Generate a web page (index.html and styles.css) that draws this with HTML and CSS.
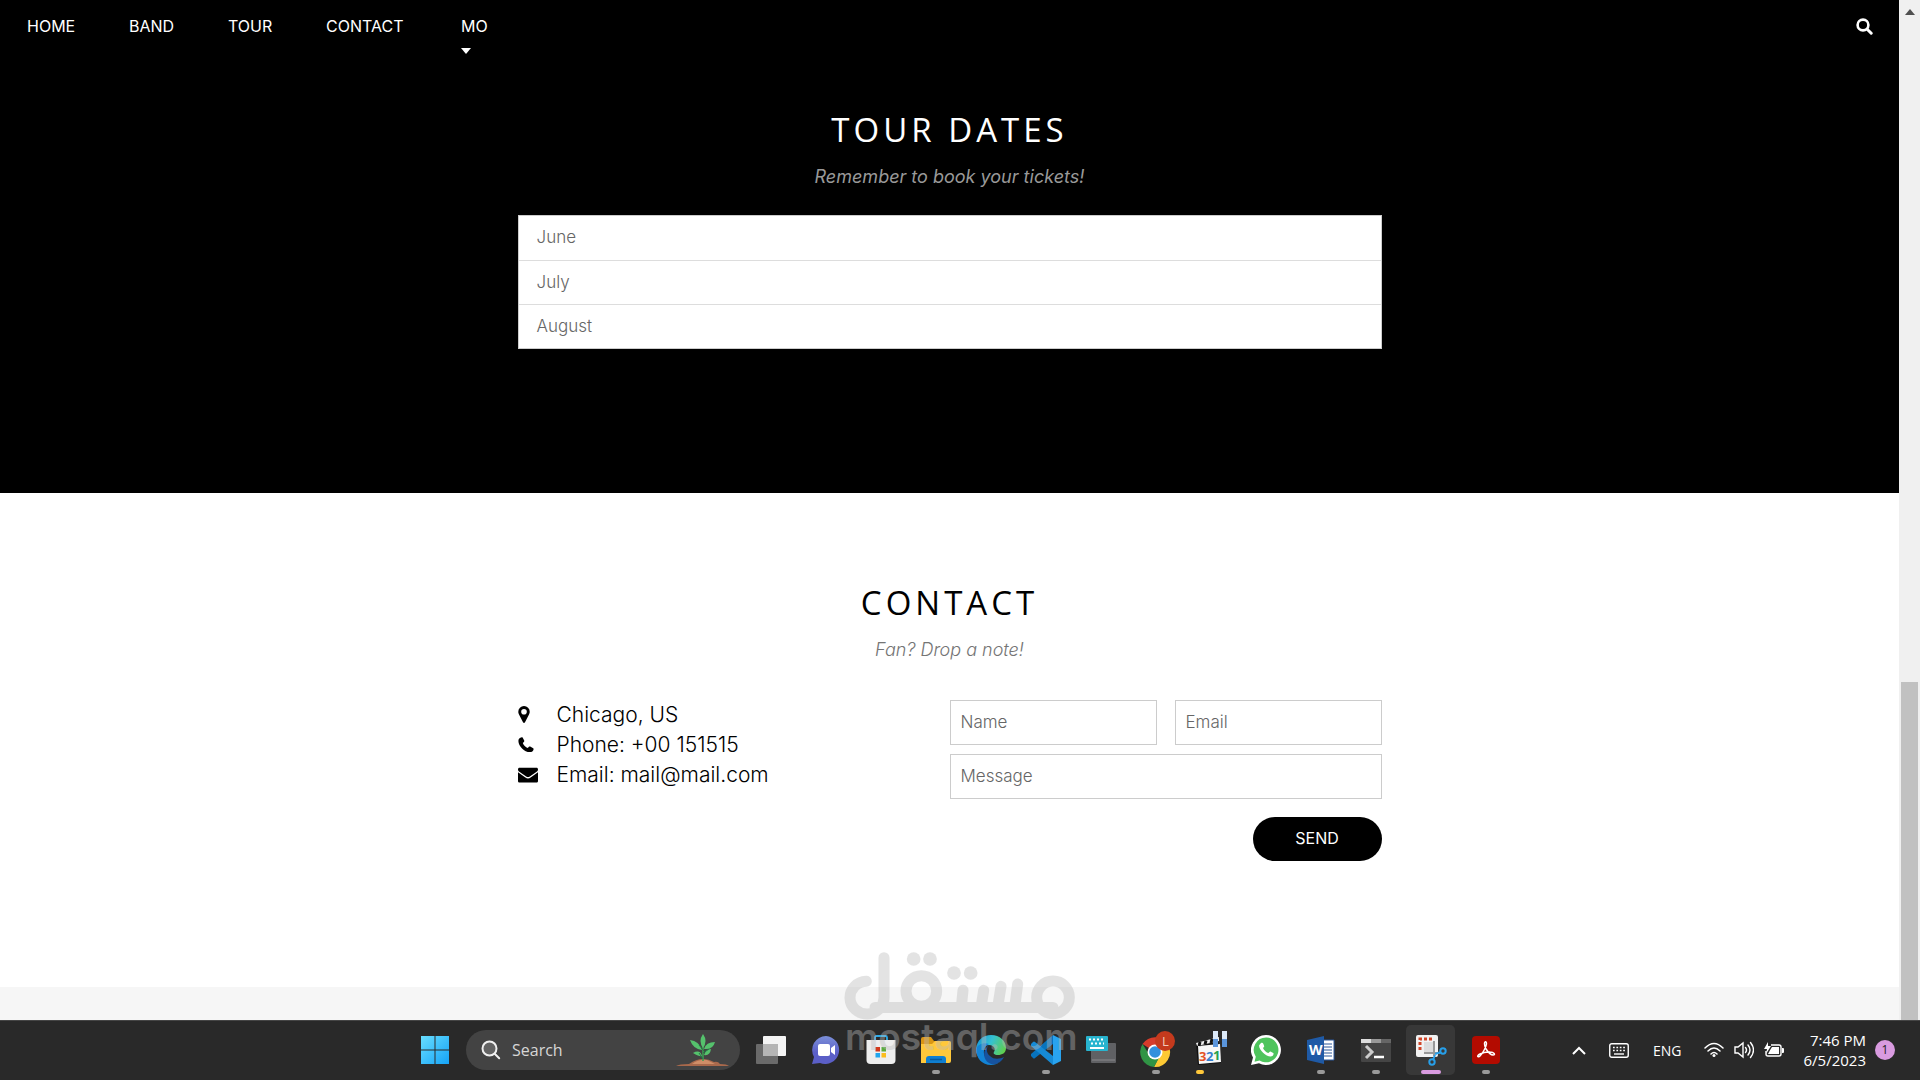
FILE: index.html
```
<!DOCTYPE html>
<html lang="en">
<head>
    <meta charset="UTF-8">
    <meta name="viewport" content="width=device-width, initial-scale=1.0">
    <title>Band - Tour and Contact</title>
    <link rel="stylesheet" href="styles.css">
</head>
<body>

<div class="window">
    <div class="page">

        <!-- Navbar -->
        <nav class="navbar">
            <a href="#home">HOME</a>
            <a href="#band">BAND</a>
            <a href="#tour">TOUR</a>
            <a href="#contact">CONTACT</a>
            <button class="more" type="button">MO
                <svg width="10" height="6" viewBox="0 0 10 6"><path d="M0 0h10L5 6z" fill="#fff"/></svg>
            </button>
            <a class="search-link" href="#search" aria-label="Search">
                <svg width="17" height="17" viewBox="0 0 17 17" fill="none" stroke="#fff" stroke-linecap="round"><circle cx="7" cy="7" r="5.4" stroke-width="2.6"/><path d="M11.2 11.2l4 4" stroke-width="3"/></svg>
            </a>
        </nav>

        <!-- Tour -->
        <section class="tour" id="tour">
            <div class="content">
                <h2>TOUR DATES</h2>
                <p class="subtitle tour-note">Remember to book your tickets!</p>
                <ul class="months">
                    <li>June</li>
                    <li>July</li>
                    <li>August</li>
                </ul>
            </div>
        </section>

        <!-- Contact -->
        <section class="contact" id="contact">
            <div class="content">
                <h2>CONTACT</h2>
                <p class="subtitle">Fan? Drop a note!</p>
                <div class="contact-row">
                    <ul class="details">
                        <li>
                            <svg width="20" height="20" viewBox="0 0 20 20"><path fill-rule="evenodd" d="M6 1a5.600 5.600 0 0 1 5.700 5.700c0 1.200-.3 1.900-.7 2.700L7 17.200q-1 1.400-2 0L1 9.400C.6 8.600.3 7.900.3 6.700A5.600 5.600 0 0 1 6 1zm0 2.900a2.800 2.800 0 1 0 0 5.600 2.800 2.800 0 0 0 0-5.600z"/></svg>
                            <span>Chicago, US</span>
                        </li>
                        <li>
                            <svg width="20" height="20" viewBox="0 0 20 20"><path d="M3.700 2.200c.5-.1.700 0 .9.400l1.600 3c.2.500.1.900-.3 1.300l-1.100 1c.9 2.300 2.700 4.100 5 5.100l1.100-1.200c.4-.4.800-.5 1.300-.2l3 1.700c.4.200.5.500.4.900-.3 1.900-1.800 2.900-3.700 2.900C6.300 17.100.5 11.200.4 5.900.4 4 1.700 2.500 3.700 2.200z"/></svg>
                            <span>Phone: +00 151515</span>
                        </li>
                        <li>
                            <svg width="20" height="20" viewBox="0 0 20 20"><path d="M1.600 2.800h16.800c1 0 1.600.6 1.600 1.600 0 1.200-.8 2-1.700 2.600l-6.500 4.500c-1.200.8-2.400.8-3.600 0L1.700 7C.7 6.300 0 5.600 0 4.400c0-1 .6-1.600 1.600-1.600zM0 7.300l7.400 5.300c1.700 1.200 3.500 1.200 5.200 0L20 7.300v8.600c0 1-.7 1.700-1.700 1.700H1.700c-1 0-1.700-.7-1.700-1.700z"/></svg>
                            <span>Email: mail@mail.com</span>
                        </li>
                    </ul>
                    <form class="note-form">
                        <input type="text" placeholder="Name" aria-label="Name">
                        <input type="email" placeholder="Email" aria-label="Email">
                        <input class="message" type="text" placeholder="Message" aria-label="Message">
                        <button type="button">SEND</button>
                    </form>
                </div>
            </div>
        </section>

        <footer class="footer"></footer>
    </div>

    <div class="scrollbar">
        <svg width="10" height="6" viewBox="0 0 10 6"><path d="M0 6h10L5 0z" fill="#505050"/></svg>
        <div class="thumb"></div>
    </div>
</div>

<!-- Taskbar -->
<div class="taskbar">
    <div class="apps">
        <button class="app" type="button" aria-label="Start">
            <svg width="30" height="30" viewBox="0 0 30 30"><defs><linearGradient id="win" x1="0" y1="0" x2="30" y2="30" gradientUnits="userSpaceOnUse"><stop stop-color="#6be0ff"/><stop offset="1" stop-color="#12a0f5"/></linearGradient></defs><path fill="url(#win)" d="M1 1h13.500v13.500H1zM15.500 1H29v13.500H15.500zM1 15.500h13.500V29H1zM15.500 15.500H29V29H15.500z"/></svg>
        </button>
        <label class="search">
            <svg width="20" height="20" viewBox="0 0 20 20" fill="#636363" stroke="#f0f0f0" stroke-width="2" stroke-linecap="round"><circle cx="8.500" cy="8.500" r="7"/><path d="M13.700 13.700l4.500 4.500"/></svg>
            <input type="text" placeholder="Search" aria-label="Search">
            <svg width="54" height="34" viewBox="0 0 54 34"><path d="M0 33q3-2 13-2 7-5 14-5 6 0 11 3 4-1 6 2 7 0 9 2z" fill="#a9694c"/><path d="M16 31q7-5 15-4l8 4z" fill="#cf8e68"/><path d="M27 28V12" stroke="#3f9d53" stroke-width="1.600"/><g fill="#55c16c"><path d="M27 15q-5-7 0-14 5 7 0 14z"/><path d="M26 17q-9-1-12-10 9 1 12 10zM28 16q2-7 11-7-2 8-11 7zM26 23q-2 1-9-3 7-4 9 3zM28 22q2-6 7-6-1 7-7 6z"/></g><path d="M27 26l-4-6M28 18l-5-6M27 20l6-4" stroke="#237b46"/></svg>
        </label>
        <button class="app" type="button" aria-label="Task view">
            <svg width="32" height="30" viewBox="0 0 32 30"><rect x="8" y="1" width="23" height="20" rx="1" fill="#f4f4f4"/><rect x="1" y="9" width="22" height="20" rx="1" fill="#7b7b7b" opacity=".8"/><path d="M8 9h15v12H8z" fill="#b5b5b5"/></svg>
        </button>
        <button class="app" type="button" aria-label="Chat">
            <svg width="30" height="30" viewBox="0 0 30 30"><defs><linearGradient id="chat" x1="0" y1="0" x2="0" y2="1"><stop stop-color="#7b8fd8"/><stop offset=".6" stop-color="#5b5fc7"/></linearGradient></defs><path d="M15 1a14 14 0 1 1-6 27l-8 1 2-7A14 14 0 0 1 15 1z" fill="url(#chat)"/><rect x="7" y="9" width="12" height="12" rx="2" fill="#fff"/><path d="M20 13l4-3v10l-4-3z" fill="#fff"/></svg>
        </button>
        <button class="app" type="button" aria-label="Microsoft Store">
            <svg width="30" height="30" viewBox="0 0 30 30"><path d="M9 6V2.500Q9 1 10.500 1h9Q21 1 21 2.500V6" fill="none" stroke="#2cabe8" stroke-width="1.800"/><path d="M.5 5h29v20q0 4-4 4h-21q-4 0-4-4z" fill="#eee"/><path d="M9.500 12H14v4.500H9.500z" fill="#d3381c"/><path d="M15.500 12H20v4.500h-4.500z" fill="#5cab3a"/><path d="M9.500 18H14v4.500H9.500z" fill="#22a6ee"/><path d="M15.500 18H20v4.500h-4.500z" fill="#fbbd1d"/></svg>
        </button>
        <button class="app running" type="button" aria-label="File Explorer">
            <svg width="30" height="30" viewBox="0 0 30 30"><path d="M0 4q0-2 2-2h8l3 4h15q2 0 2 2v6H0z" fill="#d99615"/><path d="M0 9h11l3-3h14q2 0 2 2v18q0 2-2 2H0z" fill="#ffc83a"/><path d="M5 28v-4q0-3 3-3h14q3 0 3 3v4z" fill="#0f7fd1"/><path d="M9 24.500h12" stroke="#075a9e" stroke-width="1.500"/></svg>
        </button>
        <button class="app" type="button" aria-label="Edge">
            <svg width="30" height="30" viewBox="0 0 30 30"><defs><linearGradient id="edge" x1="0" y1="0" x2="30" y2="14" gradientUnits="userSpaceOnUse"><stop stop-color="#1590d8"/><stop offset=".5" stop-color="#35c1d1"/><stop offset="1" stop-color="#62d048"/></linearGradient></defs><path d="M0 14C1 5 7 0 15 0c9 0 15 6 15 13 0 5-4 7-8 7-4 0-5-2-4-3 2-3 0-7-5-7C8 10 3 13 2 21Q0 18 0 14z" fill="url(#edge)"/><path d="M0 14c2-5 8-7 13-5-5 2-7 9-3 14s10 7 14 4c-3 2-6 3-9 3C6 30 0 23 0 14z" fill="#1384d6"/><path d="M13 10c-3 3-3 8 1 11 4 4 10 3 14 1-3 6-10 9-15 6C7 25 6 15 13 10z" fill="#1653a0"/></svg>
        </button>
        <button class="app running" type="button" aria-label="Visual Studio Code">
            <svg width="30" height="30" viewBox="0 0 30 30"><path d="M22 0l8 4v22l-8 4z" fill="#29a3ef"/><path d="M22 0v9L4 23q-1 1-2 0l-2-2q-1-1 0-2z" fill="#0873bd"/><path d="M22 30v-9L4 7Q3 6 2 7L0 9q-1 1 0 2z" fill="#168ad5"/></svg>
        </button>
        <button class="app" type="button" aria-label="On-screen keyboard">
            <svg width="32" height="30" viewBox="0 0 32 30"><rect x="6" y="8" width="25" height="20" rx="1" fill="#606164"/><path d="M7 25h23" stroke="#8a8a8c"/><rect x="1" y="1" width="22" height="15" rx="1" fill="#28b4cf"/><path d="M4 4.500h16M6 8.500h13" stroke="#fff" stroke-width="2" stroke-dasharray="2 2"/><path d="M5 13h14" stroke="#fff" stroke-width="2"/></svg>
        </button>
        <button class="app running" type="button" aria-label="Chrome">
            <svg width="38" height="42" viewBox="-1 0 38 42"><path d="M17 23L4.500 15A15 15 0 0 1 30 15.500L17 16z" fill="#d63c2b"/><path d="M17 23l13-7.500A15 15 0 0 1 16 38l6-12z" fill="#fdc934"/><path d="M17 23l5 4-6 11A15 15 0 0 1 4.500 15l7 11z" fill="#309445"/><circle cx="17" cy="23" r="7.500" fill="#fff"/><circle cx="17" cy="23" r="5.800" fill="#3390dd"/><circle cx="27" cy="12" r="10" fill="#c43a1d"/><text x="24" y="17" font-size="13" fill="#f1c9b9">L</text></svg>
        </button>
        <button class="app loading" type="button" aria-label="Media Player Classic">
            <svg width="34" height="38" viewBox="-1 0 34 38"><path d="M1 12l22-5 3 25-23 2z" fill="#111"/><path d="M3 15l22-2 1 18-22 2z" fill="#f7f7f7"/><path d="M1 12l23-6v4L2 15z" fill="#eee"/><path d="M5 11l-1 4M11 9.500l-1 4M17 8l-1 4" stroke="#111" stroke-width="3"/><g font-size="13" font-weight="700"><text x="4" y="30" fill="#e35227">3</text><text x="11" y="30" fill="#3580cc">2</text><text x="18" y="29" fill="#26a150">1</text></g><path d="M18 0h5v16h-5zM27 0h5v16h-5z" fill="#dce9f9"/><path d="M18 8h5v8h-5zM27 8h5v8h-5z" fill="#5a95dc"/></svg>
        </button>
        <button class="app" type="button" aria-label="WhatsApp">
            <svg width="30" height="30" viewBox="0 0 30 30"><path d="M15 0a15 15 0 1 1-7 28.300L0 30l2-7.500A15 15 0 0 1 15 0z" fill="#fff"/><path d="M15.200 2.500a12.400 12.400 0 1 1-6.600 23L3.500 26.700l1.300-5A12.400 12.400 0 0 1 15.200 2.500z" fill="#4ec45c"/><path d="M10 8c1-.6 1.800-.5 2.300.8l.9 2.200c.2.700-1.200 1.700-1.100 2.200 1 2.200 2.700 3.800 5 4.800.7.200 1.700-1.700 2.400-1.400l2.700 1.300c.7.400.4 2-.5 2.900C17.500 24.500 6.500 14 8.300 10z" fill="#fff"/></svg>
        </button>
        <button class="app running" type="button" aria-label="Word">
            <svg width="28" height="28" viewBox="0 0 28 28"><path d="M14 4h13v20H14z" fill="#fff" stroke="#2b579a"/><path d="M17 8h8M17 11h8M17 14h8M17 17h8M17 20h8" stroke="#2b579a"/><path d="M0 4l17-4v28L0 24z" fill="#1f5aa6"/><text x="2" y="19" font-size="14" font-weight="700" fill="#fff">W</text></svg>
        </button>
        <button class="app running" type="button" aria-label="Terminal">
            <svg width="30" height="24" viewBox="0 0 30 24"><rect y="1" width="30" height="23" rx="1" fill="#454545"/><path d="M0 1h10v4H0z" fill="#ddd"/><path d="M10 1h10v4H10z" fill="#999"/><path d="M20 1h10v4H20z" fill="#666"/><path d="M5 8l6 6-6 6" fill="none" stroke="#ccc" stroke-width="3"/><path d="M13 19h10" stroke="#fff" stroke-width="2.500"/></svg>
        </button>
        <button class="app running active" type="button" aria-label="Snipping Tool">
            <svg width="32" height="32" viewBox="0 0 32 32"><rect x="1" y="1" width="22" height="22" rx="2" fill="#f2f2f2"/><path d="M5 16V5h12" fill="none" stroke="#d04629" stroke-width="3" stroke-dasharray="3 2"/><path d="M9 20V8h9v12z" fill="#ddd"/><path d="M19 7v15M9 19h16" stroke="#999" stroke-width="2"/><g fill="none" stroke="#279fe9" stroke-width="2"><circle cx="17" cy="28" r="2.700"/><circle cx="28" cy="17" r="2.700"/><path d="M18 26l2-5M26 18l-6 2"/></g></svg>
        </button>
        <button class="app running" type="button" aria-label="Acrobat">
            <svg width="28" height="28" viewBox="0 0 28 28"><rect width="28" height="28" rx="4" fill="#b30b00"/><path d="M14 6c-2-1-2 3 0 7 2 3 5 6 7 6 3 0 1-3-3-3-4-.5-7 .5-10 2-4 2-2 4 0 2 3-3 6-9 6.500-12Q14.500 6.500 14 6z" fill="none" stroke="#fff" stroke-width="1.500"/></svg>
        </button>
    </div>

    <div class="tray">
        <svg width="14" height="9" viewBox="0 0 14 9"><path d="M1 8l6-6 6 6" fill="none" stroke="#fff" stroke-width="2"/></svg>
        <svg class="keyboard" width="20" height="15" viewBox="0 0 20 15" fill="none" stroke="#fff"><rect x=".75" y=".75" width="18.500" height="13.500" rx="2" stroke-width="1.400"/><path d="M4 4.500h13M4 7.500h13" stroke-width="1.700" stroke-dasharray="1.700 1.700"/><path d="M5 11h10" stroke-width="1.400"/></svg>
        <span class="lang">ENG</span>
        <div class="status">
            <svg width="20" height="16" viewBox="0 0 20 16" fill="none" stroke="#fff" stroke-width="1.500" stroke-linecap="round"><path d="M1 6q9-9 18 0M4 9q6-6 12 0M7 12q3-3 6 0"/><circle cx="10" cy="13.500" r="1.500" fill="#fff" stroke="none"/></svg>
            <svg width="20" height="18" viewBox="0 0 20 18" fill="none" stroke="#fff" stroke-width="1.400" stroke-linecap="round"><path d="M1 6h3l5-4v14l-5-4H1zM11.500 6.500q2 2.500 0 5M14 4q4 5 0 10M16.500 1.500q6 7.500 0 15"/></svg>
            <svg width="20" height="16" viewBox="0 0 20 16"><path d="M7 3h8q2 0 2 2v7q0 2-2 2H4q-2 0-2-2V9" fill="none" stroke="#fff" stroke-width="1.400"/><path d="M18 6h1q1 0 1 1v3q0 1-1 1h-1zM8 5h7v7H4q2-4 4-7z" fill="#fff"/><path d="M4 0L0 7h3l-1 5 5-8H4z" fill="#fff"/></svg>
        </div>
        <div class="clock">
            <div>7:46 PM</div>
            <div>6/5/2023</div>
        </div>
        <span class="badge">1</span>
    </div>
</div>

<!-- Watermark over the page and the taskbar -->
<div class="watermark">
    <svg width="230" height="67" viewBox="75 66 690 201" fill="none" stroke="#bababa" stroke-width="33" stroke-linecap="round">
        <path d="M192 83V202A51 49 0 1 1 139 154M165 232.500H699"/>
        <circle cx="699" cy="202" r="49"/>
        <circle cx="304" cy="183" r="46"/>
        <path d="M424 232L429 181M483 232L491 181M533 232L543 169M584 232L593 162"/>
        <g fill="#bababa" stroke="none"><circle cx="281" cy="87" r="20.500"/><circle cx="330" cy="87" r="20.500"/><circle cx="402" cy="129" r="20.500"/><circle cx="452" cy="129" r="20.500"/></g>
    </svg>
    <div class="watermark-text">mostaql.com</div>
</div>

</body>
</html>
```
FILE: styles.css
```
* {
    box-sizing: border-box;
}

body {
    margin: 0;
    height: 100vh;
    display: flex;
    flex-direction: column;
    overflow: hidden;
    font-family: Inter, sans-serif;
    font-size: 16px;
    color: #000;
}

h2, p, ul {
    margin: 0;
    padding: 0;
}

ul {
    list-style: none;
}

button, input {
    font-family: inherit;
    font-size: inherit;
    border: none;
}

.window {
    flex: 1;
    min-height: 0;
    display: flex;
}

.page {
    flex: 1;
    display: flex;
    flex-direction: column;
    overflow: hidden;
    background-color: #fff;
}

/* Navbar */
.navbar {
    display: grid;
    grid-template-columns: 102px 99px 98px 135px 60px 1fr;
    align-items: start;
    padding: 13px 26px 0 27px;
    height: 62px;
    flex-shrink: 0;
    line-height: 26px;
    background-color: #000;
}

.navbar a, .more {
    color: #fff;
    text-decoration: none;
}

.more {
    padding: 0;
    background: none;
    text-align: left;
    line-height: 26px;
    width: 28px;
}

.more svg {
    display: block;
    margin-top: 9px;
}

.search-link {
    justify-self: end;
    padding-top: 5px;
    line-height: 0;
}

/* Sections */
.content {
    max-width: 864px;
    margin: 0 auto;
}

h2 {
    font-family: "Open Sans", sans-serif;
    font-size: 33px;
    font-weight: 400;
    line-height: 50px;
    letter-spacing: 4px;
    text-align: center;
}

.subtitle {
    margin-top: 9px;
    font-size: 18px;
    font-weight: 300;
    line-height: 26px;
    font-style: italic;
    text-align: center;
    color: #757575;
}

.tour {
    padding: 43px 16px 144px;
    color: #fff;
    background-color: #000;
}

.tour-note {
    font-weight: 400;
    color: #999;
}

.months {
    margin-top: 25px;
    font-size: 17px;
    font-weight: 300;
    color: #666;
    background-color: #fff;
    border: 1px solid #ccc;
}

.months li {
    padding: 9px 18px 11px;
    line-height: 24px;
}

.months li + li {
    border-top: 1px solid #ddd;
    padding: 9px 18px 10px;
}

.contact {
    padding: 85px 16px 126px;
}

.contact-row {
    display: grid;
    grid-template-columns: 1fr 1fr;
    margin-top: 37px;
}

.details {
    font-size: 21px;
    font-weight: 300;
    line-height: 30px;
}

.details li {
    display: flex;
    align-items: center;
    gap: 19px;
}

.note-form {
    display: grid;
    grid-template-columns: 1fr 1fr;
    column-gap: 18px;
    row-gap: 9px;
}

.note-form input {
    min-width: 0;
    height: 45px;
    padding: 0 10px 2px;
    font-size: 17px;
    font-weight: 300;
    border: 1px solid #ccc;
}

.note-form .message {
    grid-column: span 2;
}

.note-form button {
    grid-column: 2;
    justify-self: end;
    margin-top: 9px;
    padding-bottom: 3px;
    width: 129px;
    height: 44px;
    border-radius: 22px;
    color: #fff;
    background-color: #000;
}

input::placeholder {
    color: #666;
}

.footer {
    flex: 1;
    background-color: #f6f6f6;
}

.scrollbar {
    width: 21px;
    padding-top: 9px;
    display: flex;
    flex-direction: column;
    align-items: center;
    background-color: #f0f0f0;
}

.thumb {
    width: 17px;
    height: 33.4%;
    margin-top: auto;
    background-color: #c1c1c1;
}

/* Taskbar */
.taskbar {
    height: 60px;
    display: grid;
    grid-template-columns: 1fr auto 1fr;
    align-items: center;
    padding-bottom: 1px;
    font-family: "Open Sans", sans-serif;
    color: #fff;
    background-color: #292929;
    border-top: 1px solid #454545;
}

.apps {
    grid-column: 2;
    display: flex;
    align-items: center;
}

.app {
    width: 49px;
    height: 50px;
    margin: 0 3px;
    padding: 0;
    display: flex;
    align-items: center;
    justify-content: center;
    flex-shrink: 0;
    position: relative;
    border-radius: 5px;
    background: none;
}

.running::after, .loading::after {
    content: "";
    position: absolute;
    bottom: 1px;
    width: 8px;
    height: 4px;
    border-radius: 2px;
    background-color: #9a9a9a;
}

.loading::after {
    left: 10px;
    background-color: #ffc83a;
}

.active {
    background-color: #383838;
}

.active::after {
    width: 20px;
    background-color: #d99be0;
}

.search {
    width: 274px;
    height: 40px;
    margin: 0 3px 0 4px;
    padding: 0 10px 0 15px;
    display: flex;
    align-items: center;
    border-radius: 20px;
    background-color: #434343;
}

.search input {
    flex: 1;
    min-width: 0;
    padding: 0 11px;
    font-size: 16px;
    color: #fff;
    background: none;
}

.search input::placeholder {
    color: #d6d6d6;
}

.tray {
    display: flex;
    align-items: center;
    justify-content: flex-end;
    padding-right: 25px;
    font-size: 14px;
}

.keyboard {
    margin-left: 23px;
}

.lang {
    margin-left: 24px;
}

.status {
    display: flex;
    align-items: center;
    gap: 10px;
    margin: 0 20px 0 22px;
}

.clock {
    font-size: 15px;
    line-height: 20px;
    text-align: right;
}

.badge {
    width: 20px;
    height: 20px;
    margin-left: 9px;
    border-radius: 50%;
    font-size: 12px;
    line-height: 20px;
    text-align: center;
    color: #222;
    background-color: #d99be0;
}

/* Watermark */
.watermark {
    position: absolute;
    left: 50%;
    bottom: 25px;
    width: 230px;
    margin-left: -115px;
    opacity: 0.4;
    pointer-events: none;
}

.watermark svg {
    display: block;
    overflow: visible;
}

.watermark-text {
    font-size: 37px;
    font-weight: 600;
    line-height: 36px;
    text-align: center;
    color: #bababa;
}
```
